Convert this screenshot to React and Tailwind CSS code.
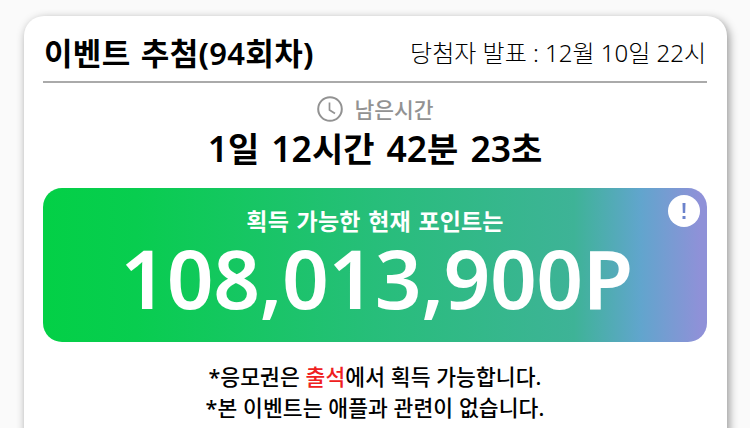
// src/App.jsx
const notices = [
  { before: '*응모권은 ', accent: '출석', after: '에서 획득 가능합니다.' },
  { before: '*본 이벤트는 애플과 관련이 없습니다.' },
];

const timeLeft = [
  { value: '1', unit: '일' },
  { value: '12', unit: '시간' },
  { value: '42', unit: '분' },
  { value: '23', unit: '초' },
];

function ClockIcon() {
  return (
    <svg className="w-[26px] h-[26px] fill-none stroke-[#929292]" viewBox="0 0 26 26" strokeWidth="2">
      <circle cx="13" cy="13" r="11.8" />
      <path d="M12.5 6.5V14L18 17.5" strokeWidth="1.7" />
    </svg>
  );
}

function PointBanner() {
  return (
    <div className="relative mt-[18px] h-[154px] rounded-[19px] bg-[linear-gradient(90deg,#03d046_0%,#08cd4f_14%,#27be7a_50%,#3eb397_80%,#61a5cd_90%,#8f91d8_99%)] text-center text-white">
      <p className="pt-[20px] text-[23px] leading-[26px] font-bold tracking-[0.15px] [word-spacing:1.5px]">
        획득 가능한 현재 포인트는
      </p>
      <p className="-mt-[3px] pl-[3px] text-[82px] leading-[92px] font-semibold tracking-[-0.5px] whitespace-nowrap">
        108,013,900P
      </p>
      {/* Info badge */}
      <button className="absolute right-[7px] top-[7px] flex h-[32px] w-[32px] items-center justify-center rounded-full bg-white">
        <svg className="h-[16px] w-[4px] fill-[#6c83cc]" viewBox="0 0 4 16">
          <path d="M0.5 0H3.5L3.2 10H0.8ZM0.5 13H3.5V16H0.5Z" />
        </svg>
      </button>
    </div>
  );
}

export default function App() {
  return (
    <div className="h-[428px] overflow-hidden bg-[#fafafa] px-[24px] pt-[16px] font-['Noto_Sans','Noto_Sans_CJK_KR',sans-serif] text-black">
      <main className="h-[440px] w-[703px] rounded-[20px] bg-white pr-[20px] pl-[19px] shadow-[2px_3px_10px_0px_rgba(0,0,0,0.42)]">
        <header className="flex h-[67px] items-center justify-between border-b-2 border-[#aaaaaa] pt-[8px] whitespace-nowrap">
          <h1 className="pl-px text-[31px] leading-[40px] font-bold tracking-[0.3px] [word-spacing:2px]">
            이벤트 추첨(<span className="font-semibold">94</span>회차)
          </h1>
          <p className="pr-px text-[24px] leading-[40px] font-light">당첨자 발표 : 12월 10일 22시</p>
        </header>

        {/* Time left */}
        <div className="mt-[13px] flex h-[26px] items-center justify-center gap-[11px] pl-px text-[#929292]">
          <ClockIcon />
          <span className="pt-px text-[21.5px] leading-[26px] font-medium">남은시간</span>
        </div>
        <p className="mt-[5px] flex h-[43px] justify-center gap-[12px] text-[34px] leading-[42px] font-bold whitespace-nowrap">
          {timeLeft.map(({ value, unit }) => (
            <span key={unit}>
              <span className="text-[35.5px] font-semibold">{value}</span>
              {unit}
            </span>
          ))}
        </p>

        <PointBanner />

        <div className="mt-[19px] text-center text-[21.5px] leading-[31px] font-medium tracking-[0.1px] whitespace-nowrap">
          {notices.map((notice) => (
            <p key={notice.before}>
              {notice.before}
              <span className="text-[#ef2020]">{notice.accent}</span>
              {notice.after}
            </p>
          ))}
        </div>
      </main>
    </div>
  );
}
